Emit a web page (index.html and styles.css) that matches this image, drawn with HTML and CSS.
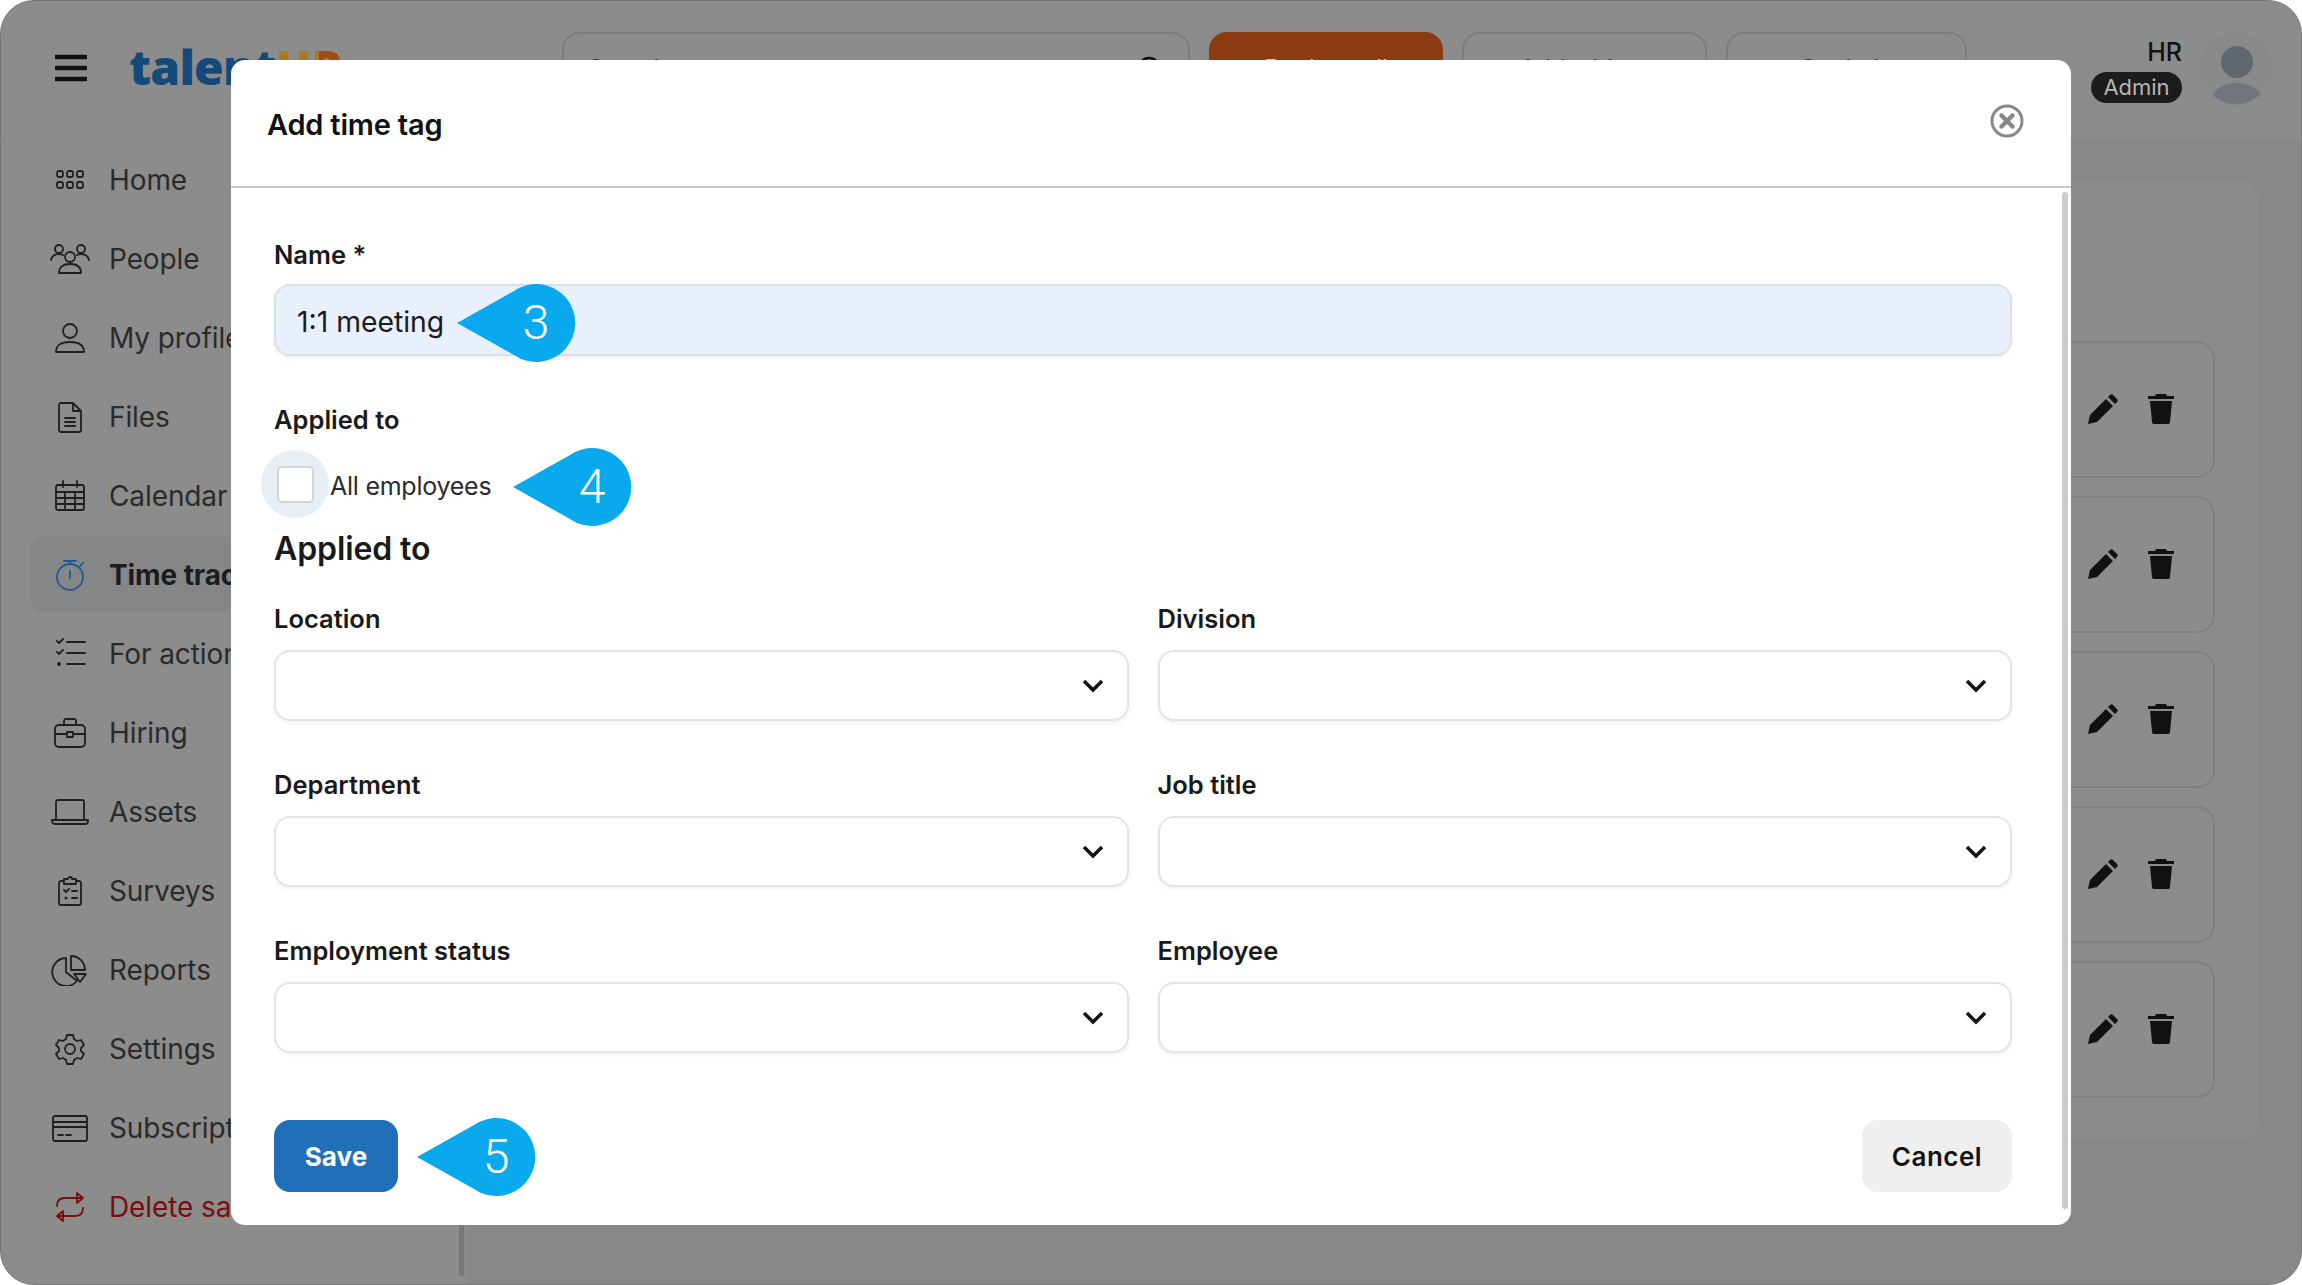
FILE: index.html
```html
<!DOCTYPE html>
<html lang="en">
<head>
<meta charset="utf-8">
<title>Add time tag</title>
<link rel="stylesheet" href="styles.css">
</head>
<body>
<div class="app">
  <header class="topbar">
    <svg class="burger" viewBox="0 0 32 28"><path d="M1 3h30M1 14h30M1 25h30"/></svg>
    <div class="logo">talent<span class="logo-up">UP</span></div>
    <div class="search tb-box"><span class="tb-text">Search</span>
      <svg class="search-icon" viewBox="0 0 28 28"><circle cx="13" cy="13" r="10"/><path d="M20 20l6 6"/></svg>
    </div>
    <div class="tb-box tb-orange"><span class="tb-text">Book a call</span></div>
    <div class="tb-box tb-md"><span class="tb-text">Add widget</span></div>
    <div class="tb-box tb-sm"><span class="tb-text">Get help</span></div>
    <div class="user">
      <div class="user-name">HR</div>
      <div class="user-role">Admin</div>
    </div>
    <div class="avatar"><span class="avatar-head"></span><span class="avatar-body"></span></div>
  </header>
  <div class="below">
    <aside class="sidebar">
      <nav class="nav">
        <a class="nav-item"><svg class="ni" viewBox="0 0 32 32"><rect x="3" y="7" width="6" height="6" rx="2"/><rect x="13" y="7" width="6" height="6" rx="2"/><rect x="23" y="7" width="6" height="6" rx="2"/><rect x="3" y="18" width="6" height="6" rx="2"/><rect x="13" y="18" width="6" height="6" rx="2"/><rect x="23" y="18" width="6" height="6" rx="2"/></svg>Home</a>
        <a class="nav-item"><svg class="ni" viewBox="0 0 40 32"><circle cx="9" cy="6" r="4"/><circle cx="31" cy="6" r="4"/><circle cx="20" cy="14" r="5"/><path d="M1 17c1-4 4-6 8-6 2 0 3 .5 4 1M39 17c-1-4-4-6-8-6-2 0-3 .5-4 1M9 30c0-6 4-9 11-9s11 3 11 9z"/></svg>People</a>
        <a class="nav-item"><svg class="ni" viewBox="0 0 32 32"><circle cx="16" cy="9" r="7"/><path d="M2 30c0-7 5-10 14-10s14 3 14 10z"/></svg>My profile</a>
        <a class="nav-item"><svg class="ni" viewBox="0 0 32 32"><path d="M5 4a2 2 0 0 1 2-2h12l8 8v19a2 2 0 0 1-2 2H7a2 2 0 0 1-2-2zM19 2v8h8M11 17h10M11 21h10M11 25h10"/></svg>Files</a>
        <a class="nav-item"><svg class="ni" viewBox="0 0 32 32"><rect x="2" y="5" width="28" height="25" rx="2"/><path d="M9 1v6M23 1v6M2 12h28M2 18h28M2 24h28M11 12v18M21 12v18"/></svg>Calendar</a>
        <a class="nav-item is-active"><svg class="ni ni-blue" viewBox="0 0 32 32"><circle cx="16" cy="18" r="13"/><path d="M10 2h12M16 2v3M16 12v7M26 7l3-3"/></svg>Time tracking</a>
        <a class="nav-item"><svg class="ni" viewBox="0 0 32 32"><path d="M3 3l2 2 4-4M13 4h18M3 14l2 2 4-4M13 15h18M13 26h18"/><circle cx="5" cy="26" r="1"/></svg>For action</a>
        <a class="nav-item"><svg class="ni" viewBox="0 0 32 32"><rect x="1" y="8" width="30" height="22" rx="4"/><path d="M10 8V4a2 2 0 0 1 2-2h8a2 2 0 0 1 2 2v4M1 17h12M19 17h12M13 15h6v5h-6z"/></svg>Hiring</a>
        <a class="nav-item"><svg class="ni" viewBox="0 0 38 32"><path d="M5 24V6a2 2 0 0 1 2-2h24a2 2 0 0 1 2 2v18M1 24h36v1a3 3 0 0 1-3 3H4a3 3 0 0 1-3-3z"/></svg>Assets</a>
        <a class="nav-item"><svg class="ni" viewBox="0 0 32 32"><path d="M10 6H7a2 2 0 0 0-2 2v20a2 2 0 0 0 2 2h18a2 2 0 0 0 2-2V8a2 2 0 0 0-2-2h-3M10 4h4a2 2 0 0 1 4 0h4v5H10zM10 15l2 2 3-3M18 16h5M18 23h5"/><circle cx="12" cy="23" r=".6"/></svg>Surveys</a>
        <a class="nav-item"><svg class="ni" viewBox="0 0 36 32"><path d="M14 4a14 14 0 1 0 11 23l-11-9zM19 2v14h14a14 14 0 0 0-14-14zM22 20h12l-6 8z"/></svg>Reports</a>
        <a class="nav-item"><svg class="ni" viewBox="0 0 32 32"><circle cx="16" cy="16" r="5"/><path d="M13 2h6l1 4 3 2 4-1 3 5-3 3v3l3 3-3 5-4-1-3 2-1 4h-6l-1-4-3-2-4 1-3-5 3-3v-3L2 12l3-5 4 1 3-2z"/></svg>Settings</a>
        <a class="nav-item"><svg class="ni" viewBox="0 0 36 32"><rect x="1" y="4" width="34" height="25" rx="2"/><path d="M1 10h34M1 15h34M6 23h5M14 23h5"/></svg>Subscription</a>
        <a class="nav-item nav-danger"><svg class="ni ni-red" viewBox="0 0 32 32"><path d="M3 15c0-5 3-8 8-8h17M23 2l6 5-6 5zM29 17c0 5-3 8-8 8H4M9 30l-6-5 6-5z"/></svg>Delete sample data</a>
      </nav>
      <span class="side-scroll"></span>
    </aside>
    <main class="main">
      <section class="panel">
        <div class="row"><svg class="act" viewBox="0 0 32 32"><path d="M1 31l2-9L19 6l7 7-16 16zM21 4l2-2a2 2 0 0 1 3 0l4 4a2 2 0 0 1 0 3l-2 2z"/></svg><svg class="act act-trash" viewBox="0 0 28 32"><path d="M10 1h8a2 2 0 0 1 2 2h7v3H1V3h7a2 2 0 0 1 2-2zM3 8h22l-2 21a2 2 0 0 1-2 2H7a2 2 0 0 1-2-2z"/></svg></div>
        <div class="row"><svg class="act" viewBox="0 0 32 32"><path d="M1 31l2-9L19 6l7 7-16 16zM21 4l2-2a2 2 0 0 1 3 0l4 4a2 2 0 0 1 0 3l-2 2z"/></svg><svg class="act act-trash" viewBox="0 0 28 32"><path d="M10 1h8a2 2 0 0 1 2 2h7v3H1V3h7a2 2 0 0 1 2-2zM3 8h22l-2 21a2 2 0 0 1-2 2H7a2 2 0 0 1-2-2z"/></svg></div>
        <div class="row"><svg class="act" viewBox="0 0 32 32"><path d="M1 31l2-9L19 6l7 7-16 16zM21 4l2-2a2 2 0 0 1 3 0l4 4a2 2 0 0 1 0 3l-2 2z"/></svg><svg class="act act-trash" viewBox="0 0 28 32"><path d="M10 1h8a2 2 0 0 1 2 2h7v3H1V3h7a2 2 0 0 1 2-2zM3 8h22l-2 21a2 2 0 0 1-2 2H7a2 2 0 0 1-2-2z"/></svg></div>
        <div class="row"><svg class="act" viewBox="0 0 32 32"><path d="M1 31l2-9L19 6l7 7-16 16zM21 4l2-2a2 2 0 0 1 3 0l4 4a2 2 0 0 1 0 3l-2 2z"/></svg><svg class="act act-trash" viewBox="0 0 28 32"><path d="M10 1h8a2 2 0 0 1 2 2h7v3H1V3h7a2 2 0 0 1 2-2zM3 8h22l-2 21a2 2 0 0 1-2 2H7a2 2 0 0 1-2-2z"/></svg></div>
        <div class="row"><svg class="act" viewBox="0 0 32 32"><path d="M1 31l2-9L19 6l7 7-16 16zM21 4l2-2a2 2 0 0 1 3 0l4 4a2 2 0 0 1 0 3l-2 2z"/></svg><svg class="act act-trash" viewBox="0 0 28 32"><path d="M10 1h8a2 2 0 0 1 2 2h7v3H1V3h7a2 2 0 0 1 2-2zM3 8h22l-2 21a2 2 0 0 1-2 2H7a2 2 0 0 1-2-2z"/></svg></div>
      </section>
    </main>
  </div>

  <div class="modal">
    <div class="modal-head">
      <h2 class="modal-title">Add time tag</h2>
      <svg class="close" viewBox="0 0 34 34"><circle cx="17" cy="17" r="15"/><path d="M11.500 11.500l11 11M22.500 11.500l-11 11"/></svg>
    </div>
    <div class="modal-body">
      <label class="label">Name *</label>
      <div class="input">1:1 meeting</div>
      <label class="label label-applied">Applied to</label>
      <div class="check-row">
        <span class="halo"><span class="checkbox"></span></span>
        <span class="check-text">All employees</span>
      </div>
      <h3 class="subhead">Applied to</h3>
      <div class="grid">
        <div class="field"><label class="label">Location</label><div class="select"><svg class="chev" viewBox="0 0 22 14"><path d="M2 2l9 9 9-9"/></svg></div></div>
        <div class="field"><label class="label">Division</label><div class="select"><svg class="chev" viewBox="0 0 22 14"><path d="M2 2l9 9 9-9"/></svg></div></div>
        <div class="field"><label class="label">Department</label><div class="select"><svg class="chev" viewBox="0 0 22 14"><path d="M2 2l9 9 9-9"/></svg></div></div>
        <div class="field"><label class="label">Job title</label><div class="select"><svg class="chev" viewBox="0 0 22 14"><path d="M2 2l9 9 9-9"/></svg></div></div>
        <div class="field"><label class="label">Employment status</label><div class="select"><svg class="chev" viewBox="0 0 22 14"><path d="M2 2l9 9 9-9"/></svg></div></div>
        <div class="field"><label class="label">Employee</label><div class="select"><svg class="chev" viewBox="0 0 22 14"><path d="M2 2l9 9 9-9"/></svg></div></div>
      </div>
      <div class="actions">
        <button class="btn btn-save">Save</button>
        <button class="btn btn-cancel">Cancel</button>
      </div>
    </div>
    <span class="modal-scroll"></span>
    <div class="callout callout-3"><svg class="callout-shape" viewBox="0 0 120 78"><path d="M1 39 L58 7 A39 39 0 1 1 58 71 Z"/></svg><span class="callout-num">3</span></div>
    <div class="callout callout-4"><svg class="callout-shape" viewBox="0 0 120 78"><path d="M1 39 L58 7 A39 39 0 1 1 58 71 Z"/></svg><span class="callout-num">4</span></div>
    <div class="callout callout-5"><svg class="callout-shape" viewBox="0 0 120 78"><path d="M1 39 L58 7 A39 39 0 1 1 58 71 Z"/></svg><span class="callout-num">5</span></div>
  </div>
</div>
</body>
</html>
```
FILE: styles.css
```css
* { box-sizing: border-box; }
html, body { margin: 0; height: 100%; background: #fff; }
body { font-family: Inter, "Open Sans", sans-serif; color: #111; overflow: hidden; }

.app {
  position: relative;
  width: 2302px;
  height: 1285px;
  display: flex;
  flex-direction: column;
  background: #87888a;
  border: 1px solid #777;
  border-radius: 34px;
  overflow: hidden;
}

/* top bar */
.topbar {
  height: 138px;
  flex: none;
  display: flex;
  align-items: flex-start;
  background: #8c8c8c;
  padding: 31px 0 0 54px;
  border-bottom: 1px solid #898989;
}
.burger { width: 32px; height: 28px; margin-top: 22px; fill: none; stroke: #111; stroke-width: 4.500; stroke-linecap: round; }
.logo {
  margin: 2px 0 0 42px;
  width: 433px;
  font-family: "Open Sans", sans-serif;
  font-size: 48px;
  line-height: 66px;
  font-weight: 800;
  letter-spacing: -.8px;
  color: #134a7a;
}
.logo-up { background: linear-gradient(90deg, #a87c1c 0 66%, #a44a10 66% 100%); -webkit-background-clip: text; background-clip: text; color: transparent; }
.tb-box {
  height: 72px;
  border: 2px solid #7d7d7d;
  border-radius: 18px;
  margin-right: 19px;
  display: flex;
  justify-content: center;
  padding-top: 20px;
  font-size: 24px;
  color: #333;
  flex: none;
}
.search { position: relative; width: 628px; justify-content: flex-start; padding-left: 24px; }
.search-icon { position: absolute; right: 24px; top: 21px; width: 28px; height: 28px; fill: none; stroke: #111; stroke-width: 2.500; }
.tb-orange { width: 234px; background: #8b3a13; border-color: #8b3a13; color: #e0c8bb; }
.tb-md { width: 245px; }
.tb-sm { width: 241px; margin-right: 0; }
.user { margin-left: auto; display: flex; flex-direction: column; align-items: flex-end; gap: 4px; padding-top: 4px; }
.user-name { font-size: 25px; line-height: 32px; font-weight: 500; color: #111; }
.user-role { height: 31px; width: 91px; border-radius: 16px; background: #1c1c1c; color: #b5b5b5; font-size: 22px; line-height: 31px; text-align: center; }
.avatar {
  position: relative;
  width: 72px;
  height: 72px;
  margin: 1px 29px 0 18px;
  border-radius: 50%;
  border: 1px solid #868686;
  overflow: hidden;
  background: #8a8a8a;
  flex: none;
}
.avatar-head { position: absolute; left: 20px; top: 12px; width: 32px; height: 32px; border-radius: 50%; background: #5f666e; }
.avatar-body { position: absolute; left: 11px; top: 49px; width: 50px; height: 34px; border-radius: 50%; background: #6f757b; }

/* below */
.below { flex: 1; min-height: 0; display: flex; }
.sidebar { width: 467px; flex: none; display: flex; background: #8c8c8c; padding: 3px 4px 8px 29px; }
.nav { flex: 1; min-width: 0; display: flex; flex-direction: column; gap: 4px; }
.side-scroll { width: 5px; height: 500px; align-self: flex-end; background: #777; border-radius: 3px; margin-left: auto; }
.nav-item {
  height: 75px;
  flex: none;
  display: flex;
  align-items: center;
  padding-left: 20px;
  border-radius: 14px;
  font-size: 28px;
  letter-spacing: -.1px;
  color: #2a2a2a;
  white-space: nowrap;
}
.nav-item.is-active { background: #858688; font-weight: 700; color: #1c1c1c; }
.nav-danger { color: #7a0d0d; }
.ni {
  width: 40px;
  height: 32px;
  margin-right: 19px;
  flex: none;
  fill: none;
  stroke: #1f1f1f;
  stroke-width: 1.800;
  stroke-linejoin: round;
  stroke-linecap: round;
}
.ni-blue { stroke: #1f5a96; }
.ni-red { stroke: #7a0d0d; }

.main { flex: 1; min-width: 0; padding: 43px 43px 0 0; }
.panel {
  height: 958px;
  background: #8c8c8c;
  border-radius: 16px;
  padding: 159px 43px 0 0;
  display: flex;
  flex-direction: column;
  gap: 18px;
}
.row {
  height: 137px;
  flex: none;
  border: 2px solid #808080;
  border-radius: 18px;
  display: flex;
  justify-content: flex-end;
  gap: 28px;
  padding: 50px 38px 0 0;
}
.act { width: 32px; height: 32px; fill: #111; }
.act-trash { width: 28px; }

/* modal */
.modal {
  position: absolute;
  left: 230px;
  top: 59px;
  width: 1840px;
  height: 1165px;
  background: #fff;
  border-radius: 14px;
  display: flex;
  flex-direction: column;
  overflow: hidden;
}
.modal-head {
  height: 128px;
  flex: none;
  display: flex;
  align-items: flex-start;
  justify-content: space-between;
  border-bottom: 2px solid #c9c9c9;
  padding: 46px 47px 0 36px;
}
.modal-title { margin: 0; font-size: 29px; line-height: 38px; font-weight: 600; letter-spacing: -.2px; color: #111; }
.close { width: 34px; height: 34px; margin-top: -2px; fill: none; stroke: #888; stroke-width: 3; }
.close path { stroke-width: 4.500; stroke-linecap: round; }
.modal-body { flex: 1; padding: 52px 59px 0 43px; display: flex; flex-direction: column; }
.label { display: block; font-size: 25.500px; line-height: 30px; font-weight: 600; color: #1a1a1a; }
.input {
  height: 72px;
  margin-top: 14px;
  background: #e8f0fe;
  border: 2px solid #dcdfe4;
  border-radius: 16px;
  box-shadow: 0 2px 4px rgba(0, 0, 0, .06);
  padding-left: 21px;
  font-size: 28.300px;
  line-height: 72px;
  color: #1a1a1a;
}
.label-applied { margin-top: 49px; }
.check-row { height: 68px; margin-top: 15px; margin-left: -13px; display: flex; align-items: center; }
.halo { width: 68px; height: 68px; border-radius: 50%; background: #e8eef6; display: flex; align-items: center; justify-content: center; flex: none; }
.checkbox { width: 37px; height: 37px; background: #fff; border: 2px solid #d5d5d5; border-radius: 5px; }
.check-text { margin-left: 1px; padding-top: 4px; font-size: 25px; color: #2b2b2b; letter-spacing: -.25px; }
.subhead { margin: 11px 0 0; font-size: 32px; line-height: 40px; font-weight: 600; letter-spacing: -.1px; color: #1a1a1a; }
.grid { margin-top: 35px; display: grid; grid-template-columns: 1fr 1fr; column-gap: 29px; row-gap: 49px; }
.select {
  height: 71px;
  margin-top: 16px;
  background: #fff;
  border: 2px solid #e4e4e4;
  border-radius: 16px;
  box-shadow: 0 2px 4px rgba(0, 0, 0, .06);
  display: flex;
  align-items: center;
  justify-content: flex-end;
  padding-right: 23px;
}
.chev { width: 22px; height: 14px; fill: none; stroke: #111; stroke-width: 3.500; }
.actions { margin-top: 67px; display: flex; justify-content: space-between; }
.btn { height: 72px; border: 0; border-radius: 16px; font-family: inherit; font-size: 26px; font-weight: 700; }
.btn-save { width: 124px; background: #206fb9; color: #fff; }
.btn-cancel { width: 150px; background: #efefef; color: #111; font-weight: 600; letter-spacing: .5px; }
.modal-scroll { position: absolute; left: 1831px; top: 132px; width: 6px; height: 1017px; background: #ccc; border-radius: 3px; }

.callout { position: absolute; width: 120px; height: 78px; display: flex; align-items: center; justify-content: flex-end; }
.callout-shape { position: absolute; inset: 0; width: 120px; height: 78px; fill: #0aa9ee; }
.callout-num { position: relative; width: 80px; text-align: center; font-family: Roboto, sans-serif; font-size: 48px; font-weight: 300; line-height: 78px; color: #fff; }
.callout-3 { left: 225px; top: 224px; }
.callout-4 { left: 281px; top: 388px; }
.callout-5 { left: 185px; top: 1058px; }
```
